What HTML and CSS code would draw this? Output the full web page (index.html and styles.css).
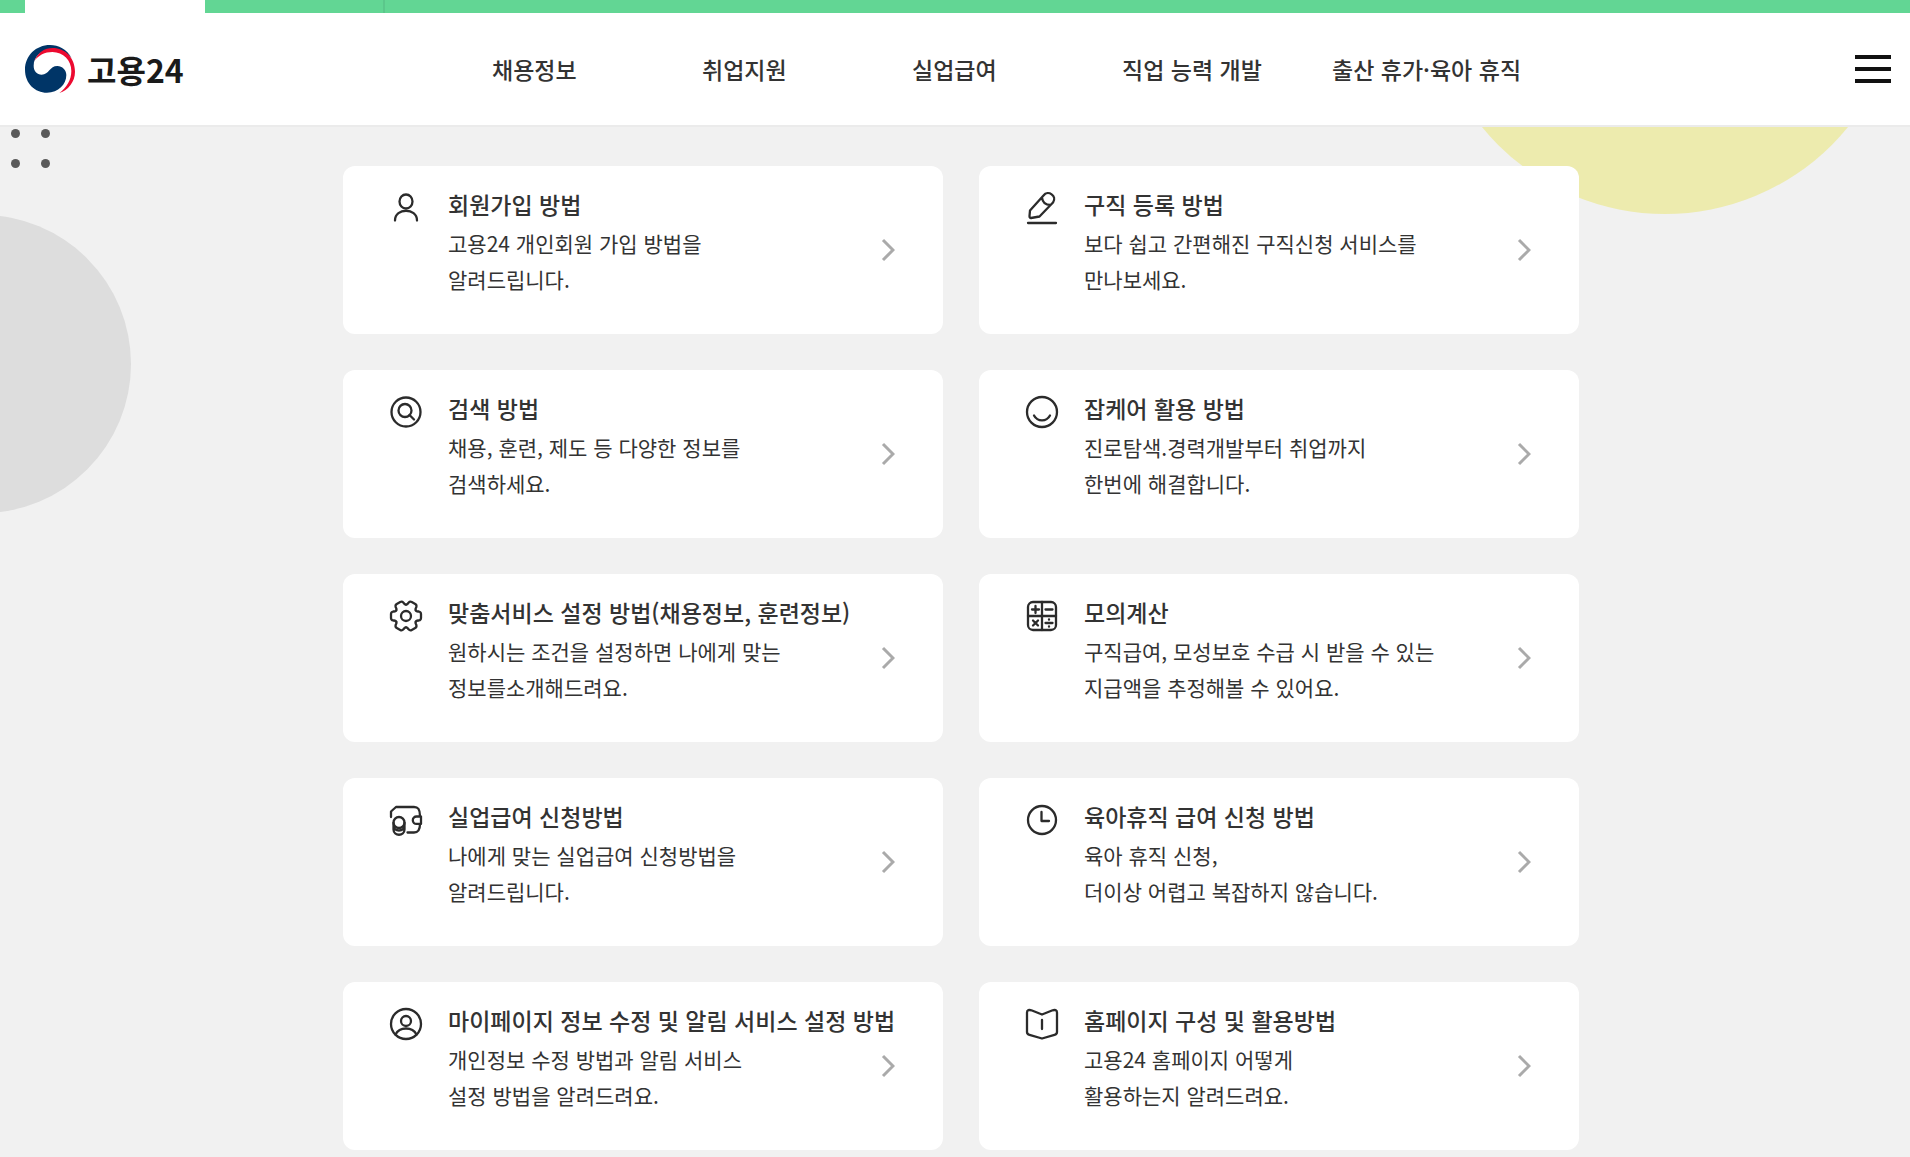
FILE: index.html
```html
<!DOCTYPE html>
<html lang="ko">
<head>
    <meta charset="UTF-8">
    <title>고용24</title>
    <link rel="stylesheet" href="styles.css">
</head>
<body>
<div class="wrap">
    <div class="topbar"><span class="tab on"></span><span class="tab"></span></div>
    <header class="header">
        <a class="logo" href="#">
            <svg width="50" height="48" viewBox="0 0 150 144" aria-hidden="true">
                <path fill="#003567" d="M140 40C126 12 100 0 75 0 33 0 0 32 0 74c0 41 30 69 66 69 34 0 58-25 58-53 0-15-12-27-27-27-23 0-25 26-47 26-14 0-24-11-24-27C26 35 50 12 82 12c24 0 46 11 58 28z"/>
                <path fill="#ec0a30" d="M28 48C40 22 58 9 83 9c37 0 67 29 67 71 0 30-20 55-47 64 22-16 36-39 36-66 0-33-24-56-57-57-22 0-42 10-54 27z"/>
            </svg>
            <span>고용24</span>
        </a>
        <nav>
            <ul class="gnb">
                <li><a href="#">채용정보</a></li>
                <li><a href="#">취업지원</a></li>
                <li><a href="#">실업급여</a></li>
                <li><a href="#">직업 능력 개발</a></li>
                <li><a href="#">출산 휴가·육아 휴직</a></li>
            </ul>
        </nav>
        <button class="menu" type="button" aria-label="전체메뉴"><span></span><span></span><span></span></button>
    </header>
    <main class="content">
        <!-- 배경 도형 -->
        <div class="deco dots"><span></span><span></span><span></span><span></span></div>
        <div class="deco gray"></div>
        <div class="deco yellow"></div>
        <ul class="list">
            <li><a class="card" href="#">
                <svg class="icon" viewBox="0 0 36 36"><ellipse cx="18" cy="11.500" rx="6.500" ry="7"/><path d="M7 30.500C7 17.500 29 17.500 29 30.500"/></svg>
                <div class="txt"><h2>회원가입 방법</h2><p>고용24 개인회원 가입 방법을<br>알려드립니다.</p></div>
                <svg class="arrow" viewBox="0 0 14 24"><path d="M2 2l10 10L2 22"/></svg>
            </a></li>
            <li><a class="card" href="#">
                <svg class="icon" viewBox="0 0 36 36"><path d="M4 33h28M6 20.500L19.500 5.500C24-.500 33.500 6 29 12.500L15.500 26.500l-8.500 1.500c-1.500 0-1.500-1-1.500-2zM18 7.500c.5 5 4 7.500 8.500 7.500"/></svg>
                <div class="txt"><h2>구직 등록 방법</h2><p>보다 쉽고 간편해진 구직신청 서비스를<br>만나보세요.</p></div>
                <svg class="arrow" viewBox="0 0 14 24"><path d="M2 2l10 10L2 22"/></svg>
            </a></li>
            <li><a class="card" href="#">
                <svg class="icon" viewBox="0 0 36 36"><circle cx="18" cy="18" r="14.500"/><circle cx="17" cy="16.500" r="6.500"/><path d="M21.500 21l4.500 4.500"/></svg>
                <div class="txt"><h2>검색 방법</h2><p>채용, 훈련, 제도 등 다양한 정보를<br>검색하세요.</p></div>
                <svg class="arrow" viewBox="0 0 14 24"><path d="M2 2l10 10L2 22"/></svg>
            </a></li>
            <li><a class="card" href="#">
                <svg class="icon" viewBox="0 0 36 36"><circle cx="18" cy="18" r="15"/><path d="M10 21.500c3.500 6.500 12.500 6.500 16 0"/></svg>
                <div class="txt"><h2>잡케어 활용 방법</h2><p>진로탐색.경력개발부터 취업까지<br>한번에 해결합니다.</p></div>
                <svg class="arrow" viewBox="0 0 14 24"><path d="M2 2l10 10L2 22"/></svg>
            </a></li>
            <li><a class="card" href="#">
                <svg class="icon" viewBox="-18 -18 36 36">
                    <defs><path id="tooth" d="M9.800-5.650C10.800-4 11.800-4.600 12.800-4.500Q15-4 15-2V2Q15 4 12.800 4.500C11.800 4.600 10.800 4 9.800 5.650"/></defs>
                    <circle r="5"/>
                    <use href="#tooth"/><use href="#tooth" transform="rotate(60)"/><use href="#tooth" transform="rotate(120)"/>
                    <use href="#tooth" transform="rotate(180)"/><use href="#tooth" transform="rotate(240)"/><use href="#tooth" transform="rotate(300)"/>
                </svg>
                <div class="txt"><h2>맞춤서비스 설정 방법(채용정보, 훈련정보)</h2><p>원하시는 조건을 설정하면 나에게 맞는<br>정보를소개해드려요.</p></div>
                <svg class="arrow" viewBox="0 0 14 24"><path d="M2 2l10 10L2 22"/></svg>
            </a></li>
            <li><a class="card" href="#">
                <svg class="icon" viewBox="0 0 36 36"><rect x="4" y="4" width="28" height="28" rx="5"/><path d="M18 4v28M4 18h28M11.500 8v7M8 11.500h7M21.500 11.500h7M9 22.500l5 5M14 22.500l-5 5M21.500 25h7M25 21.300v.4M25 28.300v.4"/></svg>
                <div class="txt"><h2>모의계산</h2><p>구직급여, 모성보호 수급 시 받을 수 있는<br>지급액을 추정해볼 수 있어요.</p></div>
                <svg class="arrow" viewBox="0 0 14 24"><path d="M2 2l10 10L2 22"/></svg>
            </a></li>
            <li><a class="card" href="#">
                <svg class="icon" viewBox="0 0 36 36"><path d="M3 15V9.500L8 5h18c4 0 6 2 6 9M32 22c0 6-2 8.500-6 8.500h-6.500M33 14.500h-4.500a3.700 3.700 0 0 0 0 7.400H33z"/><circle cx="11" cy="20.500" r="5.500"/><path d="M5.500 21v6.500c0 7 11 7 11 0V21M5.500 24c1 6 10 6 11 0"/></svg>
                <div class="txt"><h2>실업급여 신청방법</h2><p>나에게 맞는 실업급여 신청방법을<br>알려드립니다.</p></div>
                <svg class="arrow" viewBox="0 0 14 24"><path d="M2 2l10 10L2 22"/></svg>
            </a></li>
            <li><a class="card" href="#">
                <svg class="icon" viewBox="0 0 36 36"><circle cx="18" cy="18" r="14"/><path d="M17.500 10v9H25"/></svg>
                <div class="txt"><h2>육아휴직 급여 신청 방법</h2><p>육아 휴직 신청,<br>더이상 어렵고 복잡하지 않습니다.</p></div>
                <svg class="arrow" viewBox="0 0 14 24"><path d="M2 2l10 10L2 22"/></svg>
            </a></li>
            <li><a class="card" href="#">
                <svg class="icon" viewBox="0 0 36 36"><circle cx="18" cy="18" r="15"/><circle cx="18" cy="15" r="5"/><path d="M7.500 28.500c4-8 17-8 21 0"/></svg>
                <div class="txt"><h2>마이페이지 정보 수정 및 알림 서비스 설정 방법</h2><p>개인정보 수정 방법과 알림 서비스<br>설정 방법을 알려드려요.</p></div>
                <svg class="arrow" viewBox="0 0 14 24"><path d="M2 2l10 10L2 22"/></svg>
            </a></li>
            <li><a class="card" href="#">
                <svg class="icon" viewBox="0 0 36 36"><path d="M18 8.500L8 4.500C5 3.500 3 4 3 6.500V26c0 1.500 1 2.500 2.500 2.800L18 32.500l12.500-3.700C32 28.500 33 27.500 33 26V6.500C33 4 31 3.500 28 4.500zM18 14v9"/></svg>
                <div class="txt"><h2>홈페이지 구성 및 활용방법</h2><p>고용24 홈페이지 어떻게<br>활용하는지 알려드려요.</p></div>
                <svg class="arrow" viewBox="0 0 14 24"><path d="M2 2l10 10L2 22"/></svg>
            </a></li>
        </ul>
    </main>
</div>
</body>
</html>
```
FILE: styles.css
```css
*{
    box-sizing: border-box;
}
body{
    margin: 0;
    padding: 0;
    background-color: #f1f1f1;
    color: #333;
    font-family: "Noto Sans CJK KR", sans-serif;
}
ul, h2, p{
    margin: 0;
    padding: 0;
    list-style-type: none;
}
a{
    color: inherit;
    text-decoration: none;
}
.topbar{
    display: flex;
    height: 13px;
    padding-left: 25px;
    background-color: #62d694;
}
.tab{
    width: 180px;
    border-right: 2px solid #5bc78b;
}
.tab.on{
    background-color: #fff;
    border: 0;
}
.header{
    display: flex;
    align-items: center;
    height: 114px;
    padding: 0 19px 0 25px;
    background-color: #fff;
    border-bottom: 2px solid #ebebeb;
}
.logo{
    display: flex;
    align-items: center;
    gap: 12px;
    width: 467px;
    color: #1a1a1a;
    font-size: 32px;
    font-weight: 700;
    line-height: 48px;
}
.gnb{
    display: flex;
    white-space: nowrap;
    font-size: 23px;
    font-weight: 500;
    line-height: 36px;
}
.gnb li{
    min-width: 210px;
}
.menu{
    display: flex;
    flex-direction: column;
    gap: 8px;
    width: 36px;
    margin-left: auto;
    padding: 0;
    border: 0;
    background: none;
}
.menu span{
    width: 36px;
    height: 4px;
    background-color: #111;
}
.content{
    position: relative;
    overflow: hidden;
    padding: 39px 0 36px 12px;
}
.list{
    position: relative;
    display: grid;
    grid-template-columns: repeat(2, minmax(0, 1fr));
    gap: 36px;
    max-width: 1236px;
    margin: 0 auto;
}
.card{
    display: flex;
    gap: 24px;
    padding: 20px 48px 37px 45px;
    border-radius: 12px;
    background-color: #fff;
}
.icon{
    flex: none;
    width: 36px;
    height: 36px;
    margin-top: 4px;
    fill: none;
    stroke: #2b2b2b;
    stroke-width: 2.3;
    stroke-linejoin: round;
    stroke-linecap: round;
}
.txt{
    flex: 1;
    min-width: 0;
    white-space: nowrap;
}
.txt h2{
    margin-bottom: 3px;
    font-size: 23px;
    font-weight: 500;
    line-height: 36px;
}
.txt p{
    font-size: 21px;
    line-height: 36px;
}
.arrow{
    flex: none;
    align-self: center;
    width: 14px;
    height: 24px;
    margin-top: 17px;
    fill: none;
    stroke: #aaa;
    stroke-width: 3;
}
.deco{
    position: absolute;
    border-radius: 50%;
}
.gray{
    left: -167px;
    top: 88px;
    width: 298px;
    height: 298px;
    background-color: #ddd;
}
.yellow{
    right: 9px;
    top: -385px;
    width: 472px;
    height: 472px;
    background-color: #edebae;
}
.dots{
    display: grid;
    grid-template-columns: 9px 9px;
    gap: 21px;
    left: 11px;
    top: 2px;
    border-radius: 0;
}
.dots span{
    height: 9px;
    border-radius: 50%;
    background-color: #5a5a5a;
}
```
